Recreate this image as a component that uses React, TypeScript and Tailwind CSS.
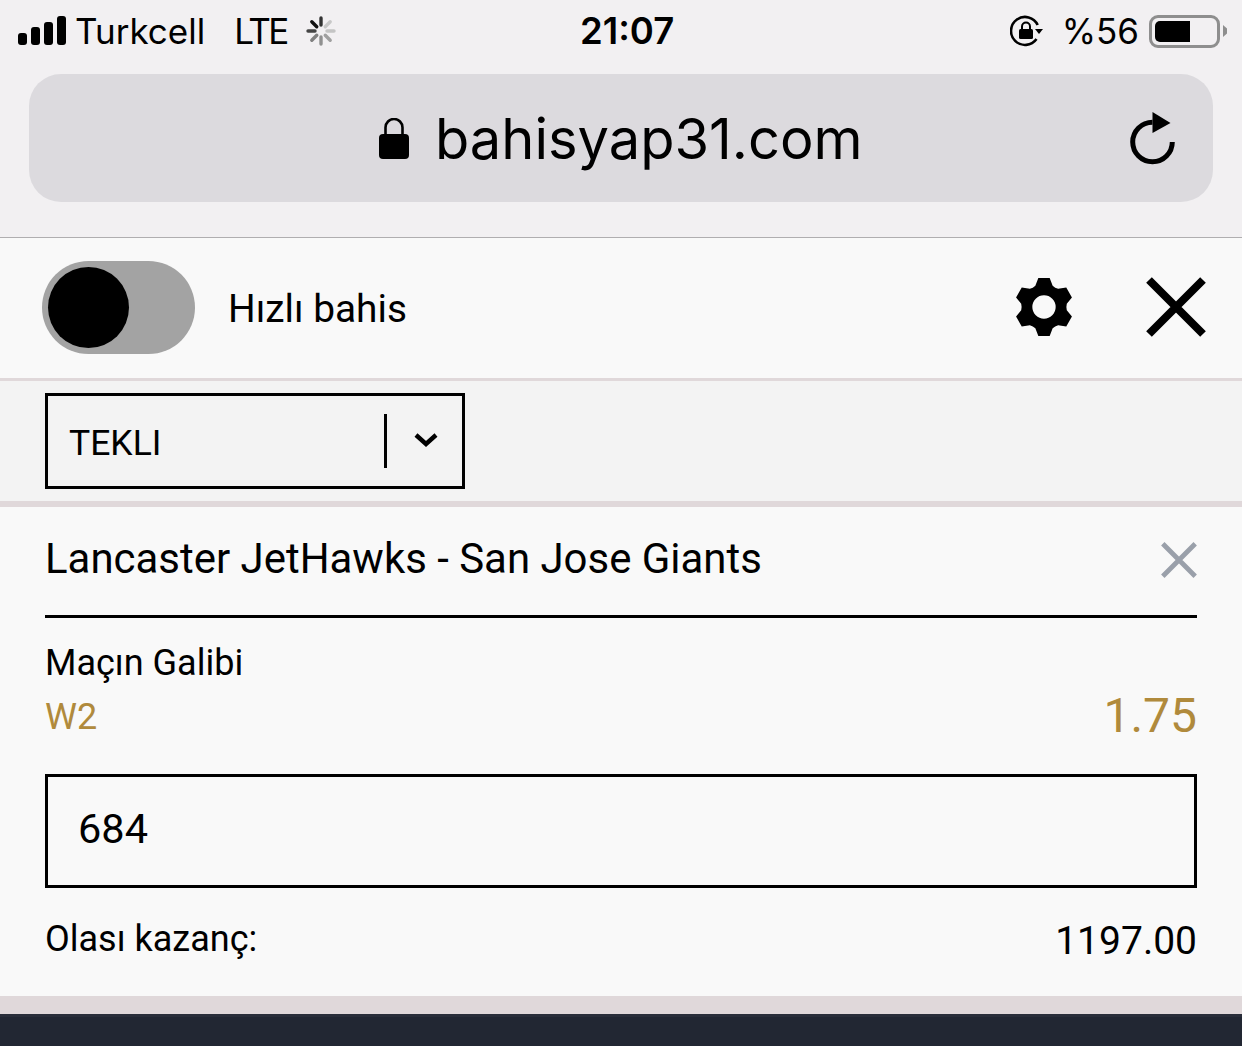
function Signal() {
  return (
    <div className="flex items-end gap-[4px] pb-[2px]">
      <div className="h-[12px] w-[9px] rounded-[3px] bg-black" />
      <div className="h-[18px] w-[9px] rounded-[3px] bg-black" />
      <div className="h-[23px] w-[9px] rounded-[3px] bg-black" />
      <div className="h-[29px] w-[9px] rounded-[3px] bg-black" />
    </div>
  );
}

function Spinner() {
  const shades = ["#333333", "#c8c8c8", "#c4c4c4", "#a0a0a0", "#909090", "#808080", "#444444", "#111111"];
  return (
    <svg width="30" height="30" viewBox="0 0 30 30">
      {shades.map((c, i) => (
        <line key={i} x1="15" y1="2" x2="15" y2="9" stroke={c} strokeWidth="3.4" strokeLinecap="round" transform={`rotate(${i * 45} 15 15)`} />
      ))}
    </svg>
  );
}

function RotationLock() {
  return (
    <svg width="34" height="32" viewBox="0 0 34 32" fill="none">
      <path d="M27.7 10 A14 14 0 1 0 26.5 24" stroke="black" strokeWidth="2.6" />
      <path d="M25 14 L33 14 L29 19 Z" fill="black" />
      <rect x="9" y="14" width="14" height="10" rx="1.5" fill="black" />
      <path d="M12 14 V11.5 A4 4 0 0 1 20 11.5 V14" stroke="black" strokeWidth="2" />
    </svg>
  );
}

function Battery() {
  return (
    <div className="flex items-center gap-[3px]">
      <div className="flex h-[33px] w-[71px] items-center rounded-[9px] border-[3px] border-[#8e8e8e] p-[3px]">
        <div className="h-full w-[35px] rounded-l-[5px] bg-black" />
      </div>
      <div className="h-[12px] w-[4px] bg-[#8e8e8e] [clip-path:polygon(0_0,100%_30%,100%_70%,0_100%)]" />
    </div>
  );
}

function Lock() {
  return (
    <svg width="30" height="41" viewBox="0 0 30 41" fill="none">
      <path d="M6.5 18 V9.5 A8.5 8.5 0 0 1 23.5 9.5 V18" stroke="black" strokeWidth="2.6" />
      <rect x="0" y="16" width="30" height="25" rx="4" fill="black" />
    </svg>
  );
}

function Reload() {
  return (
    <svg width="46" height="53" viewBox="0 0 46 53" fill="none">
      <path d="M22.5 10.2 A19.8 19.8 0 1 0 42.3 30" stroke="black" strokeWidth="5" />
      <path d="M22.5 0 L40.5 11 L22.5 21 Z" fill="black" />
    </svg>
  );
}

// six teeth, points taken from the top tooth and rotated round the centre
function gearPath() {
  const rot = (x: number, y: number, deg: number) => {
    const a = (deg * Math.PI) / 180;
    return `${(x * Math.cos(a) - y * Math.sin(a)).toFixed(1)} ${(x * Math.sin(a) + y * Math.cos(a)).toFixed(1)}`;
  };
  let d = "";
  for (let i = 0; i < 6; i++) {
    const r = i * 60;
    d += `${i === 0 ? "M" : "L"}${rot(-26, -64, r)} L${rot(-17, -87, r)} L${rot(17, -87, r)} L${rot(26, -64, r)} Q${rot(0, -66, r + 30)} ${rot(-26, -64, r + 60)} `;
  }
  return d + "Z M0 -35 A35 35 0 1 0 0 35 A35 35 0 1 0 0 -35 Z";
}

function Gear() {
  return (
    <svg width="56" height="58" viewBox="-84 -87 168 174">
      <path fillRule="evenodd" d={gearPath()} fill="black" />
    </svg>
  );
}

function Cross({ size, width, color }: { size: number; width: number; color: string }) {
  return (
    <svg width={size} height={size} viewBox="0 0 60 60" fill="none">
      <path d="M3 3 L57 57 M57 3 L3 57" stroke={color} strokeWidth={width} />
    </svg>
  );
}

function Chevron() {
  return (
    <svg width="26" height="16" viewBox="0 0 26 16" fill="none">
      <path d="M3 3 L13 12 L23 3" stroke="black" strokeWidth="4.4" />
    </svg>
  );
}

export default function App() {
  return (
    <div className="flex h-[1046px] w-[1242px] flex-col overflow-hidden bg-[#f9f9f9] font-['Roboto',sans-serif] text-black">
      <div className="h-[238px] shrink-0 border-b border-[#b0aeb0] bg-[#f2f0f2] font-['Inter',sans-serif]">
        <div className="flex h-[62px] items-center pl-[18px] pr-[15px] text-[35px]">
          <div className="flex w-[562px] items-center">
            <Signal />
            <span className="ml-[9px]">Turkcell</span>
            <span className="ml-[29px] tracking-[-2.5px]">LTE</span>
            <span className="ml-[19px]"><Spinner /></span>
          </div>
          <div className="text-[36.5px] font-semibold leading-none">21:07</div>
          <div className="flex flex-1 items-center justify-end">
            <RotationLock />
            <span className="ml-[18px]">%56</span>
            <span className="ml-[10px]"><Battery /></span>
          </div>
        </div>
        <div className="mx-[29px] mt-[12px] flex h-[128px] items-center rounded-[32px] bg-[#dcdade] pl-[350px] pr-[37px]">
          <Lock />
          <span className="ml-[26px] flex-1 pt-[2px] text-[56px]">bahisyap31.com</span>
          <Reload />
        </div>
      </div>

      <div className="flex h-[143px] shrink-0 items-center border-b-[3px] border-[#e0d8da] pb-[1px] pl-[42px] pr-[36px]">
        <div className="flex h-[93px] w-[153px] items-center rounded-full bg-[#a3a3a3] pl-[6px]">
          <div className="h-[81px] w-[81px] rounded-full bg-black" />
        </div>
        <span className="ml-[33px] flex-1 pt-[3px] text-[38.8px]">Hızlı bahis</span>
        <span className="mb-[2px]"><Gear /></span>
        <span className="mb-[2px] ml-[74px]"><Cross size={60} width={8} color="black" /></span>
      </div>

      <div className="flex h-[126px] shrink-0 items-start border-b-[6px] border-[#e0d8da] bg-[#f3f3f3] pl-[45px] pt-[12px]">
        <div className="flex h-[96px] w-[420px] items-center border-[3px] border-black pl-[21px]">
          <span className="flex-1 pt-[6px] text-[35.5px]">TEKLI</span>
          <div className="h-[54px] w-[3px] bg-black" />
          <div className="flex w-[75px] justify-center pb-[2px] pl-[3px]"><Chevron /></div>
        </div>
      </div>

      <div className="h-[489px] shrink-0 px-[45px]">
        <div className="flex h-[111px] items-center justify-between border-b-[3px] border-black">
          <span className="pb-[4px] text-[41.95px]">Lancaster JetHawks - San Jose Giants</span>
          <span className="mb-[2px]"><Cross size={36} width={8} color="#9aa0aa" /></span>
        </div>
        <div className="mt-[23px] text-[36px] leading-[44px]">Maçın Galibi</div>
        <div className="mt-[3px] flex items-end justify-between text-[#b08a3c]">
          <span className="mb-[2px] text-[36px] leading-[44px]">W2</span>
          <span className="pt-[3px] text-[48px] leading-[50px]">1.75</span>
        </div>
        <div className="mt-[33px] flex h-[114px] items-center border-[3px] border-black pb-[4px] pl-[30px] text-[41.5px]">684</div>
        <div className="mt-[24px] flex items-center justify-between">
          <span className="pb-[4px] text-[36px]">Olası kazanç:</span>
          <span className="text-[39px]">1197.00</span>
        </div>
      </div>

      <div className="h-[18px] shrink-0 bg-[#e0d8da]" />
      <div className="flex-1 border-t-[3px] border-[#2a2e3a] bg-[#222733]" />
    </div>
  );
}
